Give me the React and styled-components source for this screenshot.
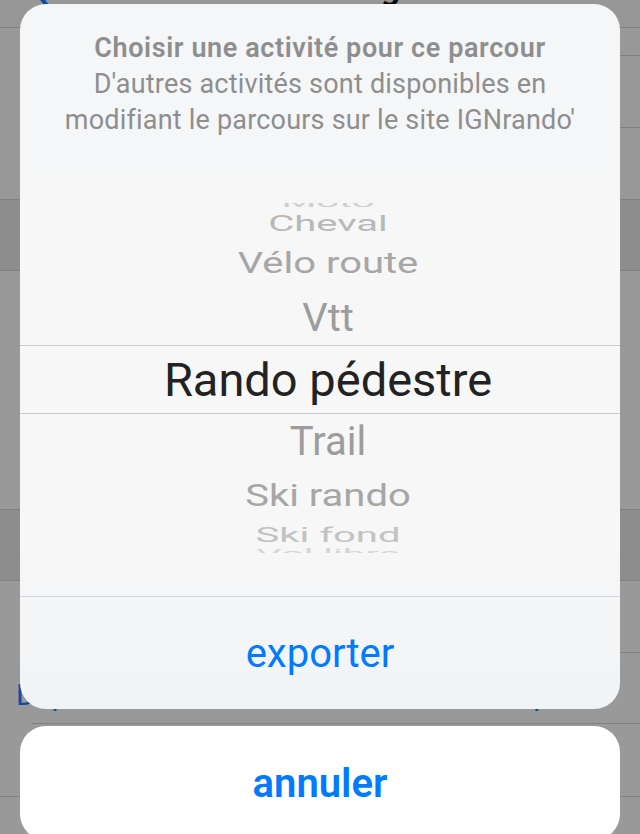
import React from "react";
import styled, { createGlobalStyle } from "styled-components";

const GlobalStyle = createGlobalStyle`
    html, body {
        margin: 0;
        padding: 0;
        width: 640px;
        height: 834px;
        overflow: hidden;
        background: #999999;
    }
    * {
        box-sizing: border-box;
    }
`;

const Screen = styled.div`
    position: relative;
    width: 640px;
    height: 834px;
    overflow: hidden;
    background: #999999;
    font-family: Roboto, "Liberation Sans", sans-serif;
`;

// dimmed table behind the sheet
const Backdrop = styled.div`
    display: flex;
    flex-direction: column;
`;

const NavBar = styled.div`
    height: 28px;
    overflow: hidden;
    border-bottom: 1px solid #808080;
    background: #979797;
`;

const NavInner = styled.div`
    height: 40px;
    margin-top: -29px;
    display: flex;
    align-items: flex-end;
    position: relative;
    padding-left: 30px;
`;

const NavTitle = styled.div`
    position: absolute;
    left: 0;
    right: 0;
    bottom: 4px;
    text-align: center;
    font-size: 34px;
    font-weight: 600;
    color: #0a0a0a;
`;

const BgRow = styled.div`
    height: ${(p) => p.$h}px;
    flex-shrink: 0;
    display: flex;
    align-items: flex-end;
    justify-content: space-between;
    padding: 0 26px 12px 16px;
    background: ${(p) => (p.$header ? "#8d8d8d" : "#999999")};
    position: relative;
    &::after {
        content: "";
        position: absolute;
        left: ${(p) => (p.$inset ? "32px" : "0")};
        right: 0;
        bottom: 0;
        height: 1px;
        background: ${(p) => (p.$line ? "#808080" : "transparent")};
    }
`;

const BgLink = styled.span`
    font-size: 30px;
    color: #0a4ea6;
`;

const SheetWrap = styled.div`
    position: absolute;
    top: 4px;
    left: 20px;
    width: 600px;
    display: flex;
    flex-direction: column;
    gap: 17px;
`;

const SheetCard = styled.div`
    background: linear-gradient(180deg, #f4f6f8 0%, #f7f7f7 40%, #f7f7f7 75%, #f1f4f7 100%);
    border-radius: 26px;
    overflow: hidden;
    display: flex;
    flex-direction: column;
`;

const Header = styled.div`
    padding: 26px 10px 0;
    text-align: center;
    color: #8e8e8e;
    font-size: 27px;
    letter-spacing: 0.2px;
    line-height: 36px;
    white-space: nowrap;
`;

const Title = styled.div`
    font-weight: 600;
    letter-spacing: 0.6px;
`;

const Wheel = styled.div`
    margin-top: 65px;
    height: 350px;
    overflow: hidden;
    display: flex;
    flex-direction: column;
`;

const WheelList = styled.div`
    margin-top: -10px;
    display: flex;
    flex-direction: column;
`;

const WheelRow = styled.div`
    height: ${(p) => p.$h}px;
    flex-shrink: 0;
    display: flex;
    align-items: center;
    justify-content: center;
    padding-left: 16px;
    border-top: ${(p) => (p.$selected ? "1px solid #c9c9c9" : "none")};
    border-bottom: ${(p) => (p.$selected ? "1px solid #c9c9c9" : "none")};
`;

const WheelLabel = styled.span`
    display: inline-block;
    white-space: nowrap;
    line-height: 1;
    font-size: ${(p) => (p.$selected ? 47 : 40)}px;
    color: ${(p) => p.$color};
    transform: scaleY(${(p) => p.$sy});
`;

const ActionButton = styled.div`
    height: ${(p) => p.$h}px;
    display: flex;
    align-items: center;
    justify-content: center;
    font-size: 40px;
    font-weight: ${(p) => (p.$bold ? 600 : 400)};
    color: #007aff;
    border-top: ${(p) => (p.$divider ? "1px solid #d3d7dc" : "none")};
    margin-top: ${(p) => p.$mt || 0}px;
`;

const CancelCard = styled.div`
    background: #ffffff;
    border-radius: 26px;
    overflow: hidden;
`;

const bgRows = [
    { h: 28, line: true, inset: true },
    { h: 72, line: true, inset: true },
    { h: 72, line: true },
    { h: 71, line: true, header: true },
    { h: 80 },
    { h: 80 },
    { h: 79, line: true },
    { h: 71, line: true, header: true },
    { h: 72, line: true, inset: true },
    { h: 71, line: true, inset: true, left: "Départ", right: "Importer" },
    { h: 73, line: true },
    { h: 80 },
];

const activities = [
    { label: "Moto", h: 20, sy: 0.3, color: "#cecece" },
    { label: "Cheval", h: 22, sy: 0.54, color: "#b8b8b8" },
    { label: "Vélo route", h: 56, sy: 0.76, color: "#a6a6a6" },
    { label: "Vtt", h: 54, sy: 0.97, color: "#9c9c9c" },
    { label: "Rando pédestre", h: 69, sy: 1, color: "#222222", selected: true },
    { label: "Trail", h: 56, sy: 1, color: "#9c9c9c" },
    { label: "Ski rando", h: 52, sy: 0.8, color: "#a6a6a6" },
    { label: "Ski fond", h: 26, sy: 0.5, color: "#c2c2c2" },
    { label: "Vol libre", h: 12, sy: 0.3, color: "#d4d4d4" },
];

const App = () => {
    return (
        <Screen>
            <GlobalStyle />
            <Backdrop>
                <NavBar>
                    <NavInner>
                        <svg width="24" height="40" viewBox="0 0 24 40">
                            <path d="M18 4 L6 20 L18 36" fill="none" stroke="#0a4ea6" strokeWidth="4" strokeLinecap="round" />
                        </svg>
                        <NavTitle>Paramétrage</NavTitle>
                    </NavInner>
                </NavBar>
                {bgRows.map((r, i) => (
                    <BgRow key={i} $h={r.h} $line={r.line} $inset={r.inset} $header={r.header}>
                        {r.left && <BgLink>{r.left}</BgLink>}
                        {r.right && <BgLink>{r.right}</BgLink>}
                    </BgRow>
                ))}
            </Backdrop>

            <SheetWrap>
                <SheetCard>
                    <Header>
                        <Title>Choisir une activité pour ce parcour</Title>
                        <div>D'autres activités sont disponibles en</div>
                        <div>modifiant le parcours sur le site IGNrando'</div>
                    </Header>
                    <Wheel>
                        <WheelList>
                            {activities.map((a) => (
                                <WheelRow key={a.label} $h={a.h} $selected={a.selected}>
                                    <WheelLabel $selected={a.selected} $color={a.color} $sy={a.sy}>
                                        {a.label}
                                    </WheelLabel>
                                </WheelRow>
                            ))}
                        </WheelList>
                    </Wheel>
                    <ActionButton $h={113} $divider $mt={43}>
                        exporter
                    </ActionButton>
                </SheetCard>
                <CancelCard>
                    <ActionButton $h={114} $bold>
                        annuler
                    </ActionButton>
                </CancelCard>
            </SheetWrap>
        </Screen>
    );
};

export default App;
